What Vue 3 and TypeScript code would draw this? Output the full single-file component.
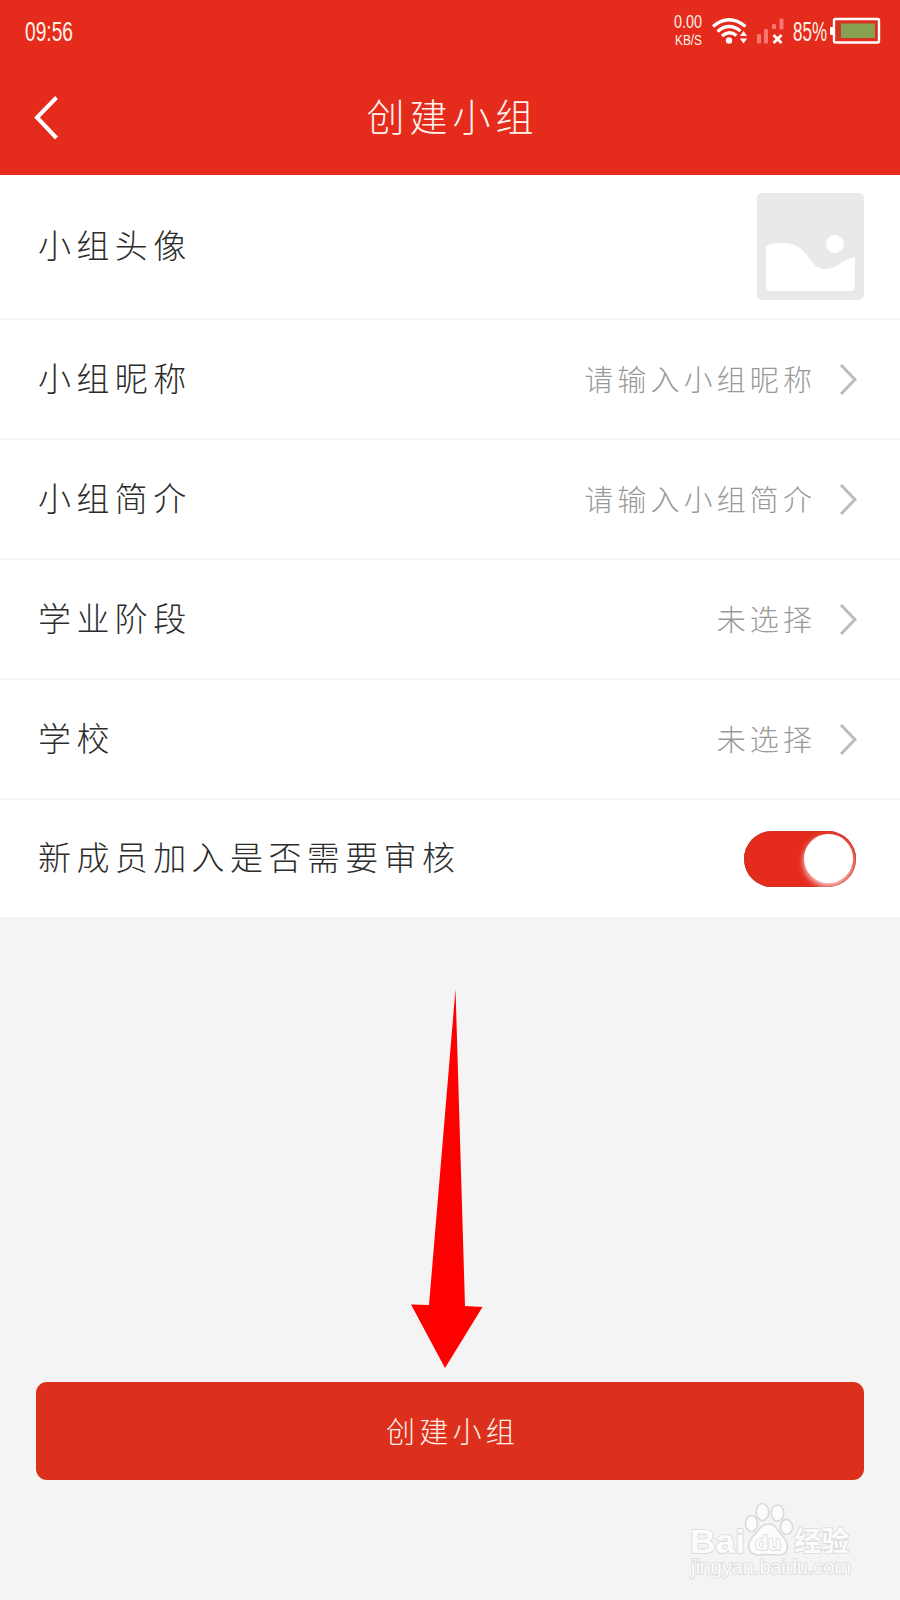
<script setup lang="ts">
interface Row {
  label: string
  value: string
}

const rows: Row[] = [
  { label: '小组昵称', value: '请输入小组昵称' },
  { label: '小组简介', value: '请输入小组简介' },
  { label: '学业阶段', value: '未选择' },
  { label: '学校', value: '未选择' },
]
</script>

<template>
  <div class="screen">
    <header class="header">
      <div class="status">
        <svg class="clock" width="120" height="60" viewBox="0 0 120 60">
          <text x="1" y="40.5" font-size="27" textLength="48" lengthAdjust="spacingAndGlyphs">09:56</text>
        </svg>
        <svg class="indicators" width="220" height="60" viewBox="670 0 220 60">
          <text x="674" y="27.5" font-size="18" textLength="28" lengthAdjust="spacingAndGlyphs">0.00</text>
          <text x="675" y="45" font-size="14.5" textLength="27" lengthAdjust="spacingAndGlyphs">KB/S</text>
          <g fill="none" stroke="#fff" stroke-width="3.4">
            <path d="M713 26.5Q729 13 745.5 26.5" />
            <path d="M717.5 31.5Q729 22 740.5 31" />
            <path d="M722 36Q729 30 736.5 35.5" />
          </g>
          <circle cx="729" cy="40.5" r="3.2" fill="#fff" />
          <path d="M743.5 31l3.6 5h-7.2zM743.5 43.5l3.6-5h-7.2z" fill="#fff" />
          <g fill="#f87772">
            <rect x="757" y="34" width="4" height="9.5" rx="1" />
            <rect x="764" y="29" width="4" height="14.5" rx="1" />
            <rect x="772" y="24" width="4" height="5" rx="1" />
            <rect x="779.5" y="18.5" width="4" height="11" rx="1" />
          </g>
          <path d="M773.5 35l8 8m0-8l-8 8" stroke="#fff" stroke-width="2.8" />
          <text x="793" y="41" font-size="27" textLength="34" lengthAdjust="spacingAndGlyphs">85%</text>
          <rect x="830" y="27" width="4" height="8" rx="1" fill="#fff" />
          <rect x="834" y="19" width="45" height="23.5" rx="1.5" fill="none" stroke="#fff" stroke-width="2.4" />
          <rect x="837.5" y="22.5" width="38" height="16.5" fill="#c93a24" />
          <rect x="841" y="23.5" width="34" height="14.5" fill="#88a052" />
        </svg>
      </div>
      <div class="nav">
        <svg class="back" width="26" height="46" viewBox="0 0 26 46">
          <path d="M23.5 2.5L4 22.500l19.500 20.500" fill="none" stroke="#fff" stroke-width="4" />
        </svg>
        <h1 class="title">创建小组</h1>
      </div>
    </header>

    <main class="list">
      <div class="row avatar-row">
        <span class="label">小组头像</span>
        <svg class="avatar" width="107" height="107" viewBox="0 0 107 107">
          <rect width="107" height="107" rx="5" fill="#e9e9e9" />
          <circle cx="78" cy="51" r="9" fill="#fff" />
          <path
            d="M9 53Q15 50 23 50C53 48 50 76 68 76C80 76 84 67 98 64V93Q98 98 93 98H14Q9 98 9 93Z"
            fill="#fff"
          />
        </svg>
      </div>
      <div v-for="row in rows" :key="row.label" class="row">
        <span class="label">{{ row.label }}</span>
        <span class="value">{{ row.value }}</span>
        <svg class="chevron" width="20" height="34" viewBox="0 0 20 34">
          <path d="M2 3L16 17.500L2 32" fill="none" stroke="#bcbcbc" stroke-width="3" />
        </svg>
      </div>
      <div class="row switch-row">
        <span class="label">新成员加入是否需要审核</span>
        <span class="switch"><span class="knob"></span></span>
      </div>
    </main>

    <button class="submit">创建小组</button>

    <svg class="arrow" width="74" height="381" viewBox="410 988 74 381">
      <path d="M455.5 989L465 1306L482.5 1307L445 1368L411 1304.5L429 1305Z" fill="#f00" />
    </svg>

    <svg class="watermark" width="220" height="105" viewBox="680 1495 220 105">
      <g fill="#fcfcfc" stroke="#d9d9d9" stroke-width="1.6">
        <text class="brand" x="690" y="1553" font-size="34" textLength="55" lengthAdjust="spacingAndGlyphs">Bai</text>
        <ellipse cx="751.500" cy="1523.500" rx="6" ry="8" />
        <ellipse cx="762.500" cy="1512" rx="6.300" ry="8.500" />
        <ellipse cx="777.500" cy="1513" rx="6.300" ry="8" />
        <ellipse cx="786.500" cy="1527" rx="6" ry="7.500" />
        <path d="M768.500 1524c7 0 9 6 14 12c8 9 6 19-4 19c-6 0-15-1-20 0c-10 0-13-10-6-18c6-6 8-13 16-13z" />
        <text class="brand" x="755" y="1550" font-size="21" textLength="26" lengthAdjust="spacingAndGlyphs">du</text>
        <text class="brand" x="794" y="1551" font-size="27" textLength="55" lengthAdjust="spacingAndGlyphs">经验</text>
        <text class="site" x="691" y="1574" font-size="19.5" textLength="160" lengthAdjust="spacingAndGlyphs">jingyan.baidu.com</text>
      </g>
    </svg>
  </div>
</template>

<style>
body {
  margin: 0;
}
</style>

<style scoped>
.screen {
  position: relative;
  width: 900px;
  height: 1600px;
  overflow: hidden;
  background: #f4f4f4;
  font-family: 'Open Sans', 'Noto Sans CJK SC', sans-serif;
  font-weight: 300;
}

.header {
  height: 175px;
  background: #e42b1c;
  color: #fff;
}

.status {
  display: flex;
  justify-content: space-between;
  height: 60px;
  padding: 0 10px 0 24px;
}

.status text {
  fill: #fff2e8;
  font-family: 'Liberation Sans', sans-serif;
  font-weight: 400;
}

.nav {
  display: grid;
  grid-template-columns: 26px 1fr 26px;
  align-items: center;
  height: 115px;
  padding: 0 33px;
}

.title {
  margin: 0;
  padding: 0 0 3px 5px;
  font-size: 38px;
  font-weight: 300;
  line-height: 50px;
  letter-spacing: 5px;
  text-align: center;
  color: #fff3ee;
}

.list {
  height: 742px;
  background: #fff;
}

.row {
  display: flex;
  align-items: center;
  box-sizing: border-box;
  height: 120px;
  padding: 0 41px 0 38px;
  border-bottom: 2px solid #f5f5f5;
}

.avatar-row {
  height: 145px;
  padding-right: 36px;
}

.switch-row {
  height: 117px;
  padding-right: 44px;
  border-bottom: 0;
}

.label {
  flex: 1;
  padding-bottom: 1px;
  font-size: 33px;
  line-height: 46px;
  letter-spacing: 5.4px;
  color: #2c2c2c;
}

.value {
  margin-right: 23px;
  padding-top: 2px;
  font-size: 29px;
  line-height: 40px;
  letter-spacing: 4.1px;
  color: #999;
}

.switch {
  display: flex;
  align-items: center;
  justify-content: flex-end;
  box-sizing: border-box;
  width: 112px;
  height: 56px;
  padding-right: 3px;
  border-radius: 28px;
  overflow: hidden;
  background: #e42b1c;
  box-shadow: inset 0 0 1px 1px #cd3328;
}

.knob {
  width: 49px;
  height: 49px;
  border-radius: 50%;
  background: #fff;
  box-shadow: 0 3px 6px rgba(255, 255, 255, 0.85);
}

.submit {
  display: block;
  width: 828px;
  height: 98px;
  margin: 465px 36px 0;
  padding: 0 0 3px 5px;
  border: 0;
  border-radius: 11px;
  background: #dc301c;
  color: #fff0e6;
  font: inherit;
  font-size: 29px;
  letter-spacing: 4.2px;
}

.arrow {
  position: absolute;
  left: 410px;
  top: 988px;
}

.watermark {
  position: absolute;
  left: 680px;
  top: 1495px;
}

.brand {
  font-family: 'Liberation Sans', 'Noto Sans CJK SC', sans-serif;
  font-weight: 700;
  paint-order: stroke;
}

.site {
  font-family: 'Liberation Sans', sans-serif;
  font-weight: 400;
  paint-order: stroke;
}
</style>
